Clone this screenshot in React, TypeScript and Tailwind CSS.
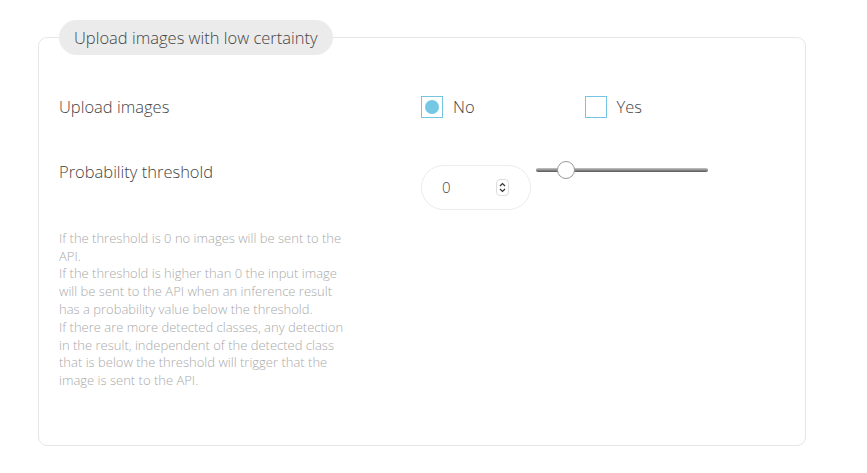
import { useState } from 'react';

const font = { fontFamily: '"Open Sans", "Liberation Sans", sans-serif' };

function Choice({ label, checked, onClick }: { label: string; checked: boolean; onClick: () => void }) {
  return (
    <button type="button" onClick={onClick} className="flex items-center gap-[10px] text-[16.5px] text-[#444] font-light">
      <span className="w-[22px] h-[22px] border border-[#74c6e2] flex items-center justify-center bg-white">
        {checked && <span className="w-[14px] h-[14px] rounded-full bg-[#74c8e4]" />}
      </span>
      {label}
    </button>
  );
}

export default function App() {
  const [upload, setUpload] = useState(false);
  const [threshold, setThreshold] = useState(0);

  return (
    <div className="min-h-screen bg-white pt-[20px] px-[38px]" style={font}>
      <fieldset className="w-[768px] h-[426px] border border-[#e6e6e6] rounded-[9px] px-[20px]">
        <legend className="bg-[#ebebeb] rounded-full h-[35px] px-[15px] text-[16.5px] text-[#444] font-light leading-[35px]">
          Upload images with low certainty
        </legend>

        {/* Upload images row */}
        <div className="grid grid-cols-[362px_1fr] items-center mt-[40px]">
          <div className="text-[16.5px] text-[#444] font-light">Upload images</div>
          <div className="flex items-center gap-[110px]">
            <Choice label="No" checked={!upload} onClick={() => setUpload(false)} />
            <Choice label="Yes" checked={upload} onClick={() => setUpload(true)} />
          </div>
        </div>

        {/* Probability threshold row */}
        <div className="grid grid-cols-[362px_1fr] mt-[42px]">
          <div>
            <div className="text-[16.5px] text-[#444] font-light leading-[24px] mt-[-2px]">Probability threshold</div>
            <p className="w-[292px] mt-[46px] text-[13px] leading-[17.8px] text-[#aaa] font-light">
              If the threshold is 0 no images will be sent to the API.
              <br />
              If the threshold is higher than 0 the input image will be sent to the API when an inference result has a probability value below the threshold.
              <br />
              If there are more detected classes, any detection in the result, independent of the detected class that is below the threshold will trigger that the image is sent to the API.
            </p>
          </div>
          <div className="flex items-start gap-[5px]">
            <div className="w-[110px] h-[45px] mt-[3px] rounded-full border border-[#ececec] flex items-center pl-[20px] pr-[21px]">
              <span className="flex-1 text-[15px] text-[#444] font-light">{threshold}</span>
              <span className="w-[13px] h-[17px] rounded-[4px] border border-[#ddd] flex flex-col items-center justify-center gap-[1px]">
                <svg width="7" height="5" viewBox="0 0 7 5"><path d="M1 4 L3.5 1.5 L6 4" fill="none" stroke="#333" strokeWidth="1.2" /></svg>
                <svg width="7" height="5" viewBox="0 0 7 5"><path d="M1 1 L3.5 3.5 L6 1" fill="none" stroke="#333" strokeWidth="1.2" /></svg>
              </span>
            </div>
            <div className="relative w-[172px] h-[20px] flex items-center mt-[-2px]">
              <div className="w-full h-[4px] rounded-full bg-gradient-to-b from-[#c8c8c8] to-[#555]" />
              <button
                type="button"
                onClick={() => setThreshold(threshold)}
                className="absolute left-[21px] top-[1px] w-[18px] h-[18px] rounded-full bg-white border border-[#999]"
              />
            </div>
          </div>
        </div>
      </fieldset>
    </div>
  );
}
